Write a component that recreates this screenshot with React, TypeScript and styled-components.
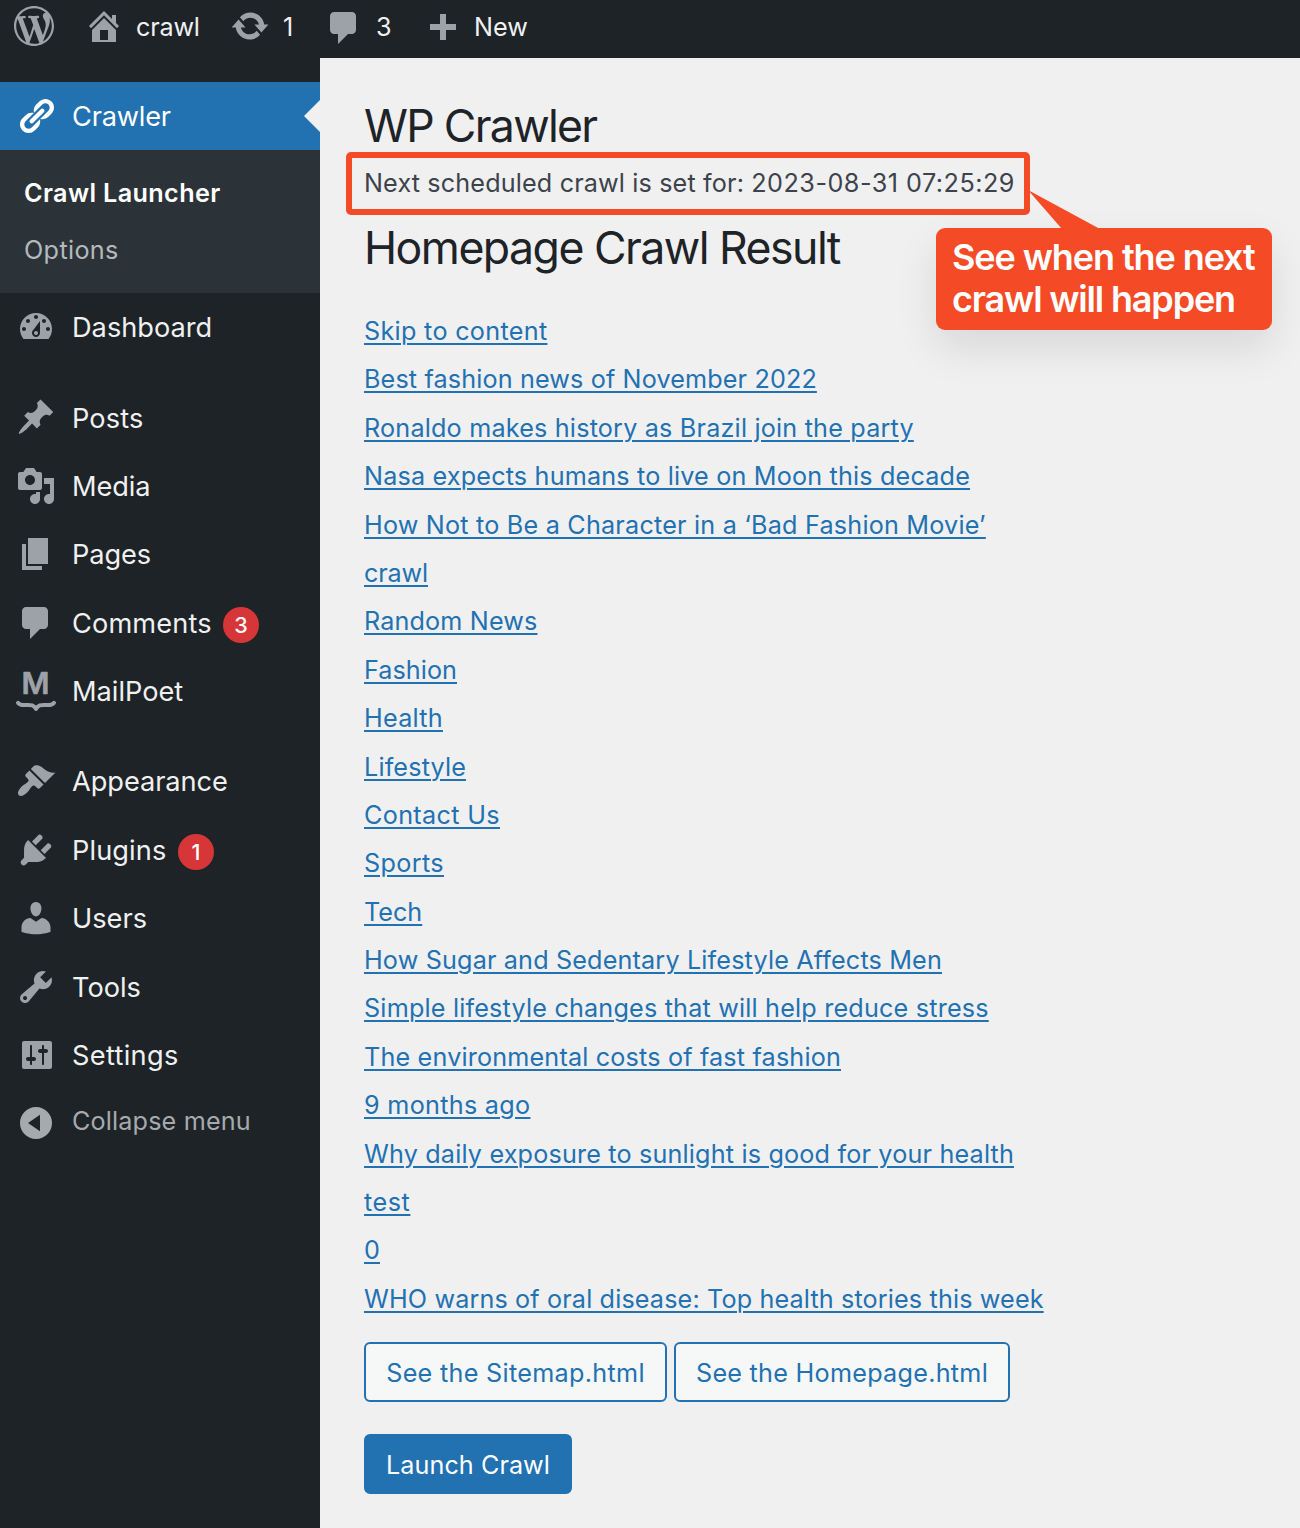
import React from "react";
import styled, { createGlobalStyle, css } from "styled-components";

const colors = {
  bar: "#1d2327",
  submenu: "#2c3338",
  blue: "#2271b1",
  page: "#f0f0f1",
  icon: "#9ca2a7",
  menuText: "#f0f0f1",
  body: "#3c434a",
  heading: "#1d2327",
  badge: "#d63638",
  note: "#f54a26",
};

const GlobalStyle = createGlobalStyle`
  *, *::before, *::after { box-sizing: border-box; }
  body {
    margin: 0;
    background: ${colors.page};
    font-family: Inter, "Liberation Sans", sans-serif;
    font-size: 25.2px;
    color: ${colors.body};
  }
`;

const Text = styled.span<{ $ls?: number }>`
  white-space: nowrap;
  letter-spacing: ${(p) => p.$ls ?? 0}px;
`;

/* ---------- icons ---------- */

const Glyph = styled.svg`
  display: block;
  flex: none;
  width: 40px;
  height: 40px;
  fill: currentColor;
  fill-rule: evenodd;
  overflow: visible;
`;

const paths = {
  wordpress:
    "M20 10c0-5.51-4.49-10-10-10C4.48 0 0 4.49 0 10c0 5.52 4.48 10 10 10 5.51 0 10-4.48 10-10zM7.78 15.37L4.37 6.22c.55-.02 1.17-.08 1.17-.08.5-.06.44-1.13-.06-1.11 0 0-1.45.11-2.37.11-.18 0-.37 0-.58-.01C4.12 2.69 6.87 1.11 10 1.11c2.33 0 4.45.87 6.05 2.34-.68-.11-1.65.39-1.65 1.58 0 .74.45 1.36.9 2.1.35.61.55 1.36.55 2.46 0 1.49-1.4 5-1.4 5l-3.03-8.37c.54-.02.82-.17.82-.17.5-.05.44-1.25-.06-1.22 0 0-1.44.12-2.38.12-.87 0-2.33-.12-2.33-.12-.5-.03-.56 1.2-.06 1.22l.92.08 1.26 3.41zM17.41 10c.24-.64.74-1.87.43-4.25.7 1.29 1.05 2.71 1.05 4.25 0 3.29-1.73 6.24-4.4 7.78.97-2.59 1.94-5.2 2.92-7.78zM6.1 18.09C3.12 16.65 1.11 13.53 1.11 10c0-1.3.23-2.48.72-3.59C3.25 10.3 4.67 14.2 6.1 18.09zm4.03-6.63l2.58 6.98c-.86.29-1.76.45-2.71.45-.79 0-1.57-.11-2.29-.33.81-2.38 1.62-4.74 2.42-7.1z",
  home: "M16 8.5l1.53 1.53-1.06 1.06L10 4.6l-6.47 6.49-1.06-1.06L10 2.5l4 4v-2h2v4zm-6-2.46l6 5.99V18H4v-5.97zM12 17v-5H8v5h4z",
  update:
    "M10.2 3.28c3.53 0 6.43 2.61 6.92 6h2.08l-3.5 4-3.5-4h2.32c-.45-1.97-2.21-3.45-4.32-3.45-1.45 0-2.73.71-3.54 1.78L4.95 5.66C6.23 4.2 8.11 3.28 10.2 3.28zm-.4 13.44c-3.52 0-6.43-2.61-6.92-6H.8l3.5-4c1.17 1.33 2.33 2.67 3.5 4H5.48c.45 1.97 2.21 3.45 4.32 3.45 1.45 0 2.73-.71 3.54-1.78l1.71 1.95c-1.28 1.46-3.15 2.38-5.25 2.38z",
  comments: "M5 2h9c1.1 0 2 .9 2 2v7c0 1.1-.9 2-2 2h-2l-5 5v-5H5c-1.1 0-2-.9-2-2V4c0-1.1.9-2 2-2z",
  plus: "M17 8.5v3h-5v5H9v-5H4v-3h5v-5h3v5z",
  link: "M17.74 2.76c1.68 1.69 1.68 4.41 0 6.1l-1.53 1.52c-1.12 1.12-2.7 1.47-4.14 1.09l2.62-2.61.76-.77.76-.76c.84-.84.84-2.2 0-3.04-.84-.85-2.2-.85-3.04 0l-.77.76-3.38 3.38c-.37-1.44-.02-3.02 1.1-4.14l1.52-1.53c1.69-1.68 4.42-1.68 6.1 0zM8.59 13.43l5.34-5.34c.42-.42.42-1.1 0-1.52-.44-.43-1.13-.39-1.53 0l-5.33 5.34c-.42.42-.42 1.1 0 1.52.44.43 1.13.39 1.52 0zm-.76 2.29l4.14-4.15c.38 1.44.03 3.02-1.09 4.14l-1.52 1.53c-1.69 1.68-4.41 1.68-6.1 0-1.68-1.68-1.68-4.42 0-6.1l1.53-1.52c1.12-1.12 2.7-1.47 4.14-1.1l-4.14 4.15c-.85.84-.85 2.2 0 3.05.84.84 2.2.84 3.04 0z",
  dashboard:
    "M3.76 16h12.48c1.1-1.37 1.76-3.11 1.76-5 0-4.42-3.58-8-8-8s-8 3.58-8 8c0 1.89.66 3.63 1.76 5zM10 4c.55 0 1 .45 1 1s-.45 1-1 1-1-.45-1-1 .45-1 1-1zM6 6c.55 0 1 .45 1 1s-.45 1-1 1-1-.45-1-1 .45-1 1-1zm8 0c.55 0 1 .45 1 1s-.45 1-1 1-1-.45-1-1 .45-1 1-1zm-5.37 5.55L12 7v6c0 1.1-.9 2-2 2s-2-.9-2-2c0-.57.24-1.08.63-1.45zM4 10c.55 0 1 .45 1 1s-.45 1-1 1-1-.45-1-1 .45-1 1-1zm12 0c.55 0 1 .45 1 1s-.45 1-1 1-1-.45-1-1 .45-1 1-1zm-6 2c.55 0 1 .45 1 1s-.45 1-1 1-1-.45-1-1 .45-1 1-1z",
  post: "M10.44 3.02l1.82-1.82 6.36 6.35-1.83 1.82c-1.05-.68-2.48-.57-3.41.36l-.75.75c-.92.93-1.04 2.35-.35 3.41l-1.83 1.82-2.41-2.41-2.8 2.79c-.42.42-3.38 2.71-3.8 2.29s1.86-3.39 2.28-3.81l2.79-2.79L4.1 9.36l1.83-1.82c1.05.69 2.48.57 3.4-.36l.75-.75c.93-.92 1.05-2.35.36-3.41z",
  media:
    "M13 11V4c0-.55-.45-1-1-1h-1.67L9 1H5L3.67 3H2c-.55 0-1 .45-1 1v7c0 .55.45 1 1 1h10c.55 0 1-.45 1-1zM7 4.5c1.38 0 2.5 1.12 2.5 2.5S8.38 9.5 7 9.5 4.5 8.38 4.5 7 5.62 4.5 7 4.5zM14 6h5v10.5c0 1.38-1.12 2.5-2.5 2.5S14 17.88 14 16.5s1.12-2.5 2.5-2.5c.17 0 .34.02.5.05V9h-3V6zm-4 8.05V13h2v3.5c0 1.38-1.12 2.5-2.5 2.5S7 17.88 7 16.5 8.12 14 9.5 14c.17 0 .34.02.5.05z",
  page: "M6 15V2h10v13H6zm-1 1h8v2H3V5h2v11z",
  appearance:
    "M14.48 11.06L7.41 3.99l1.5-1.5c.5-.56 2.3-.47 3.51.32 1.21.8 1.43 1.28 2.91 2.1 1.18.64 2.45 1.26 4.45.85zm-.71.71L6.7 4.7 4.93 6.47c-.39.39-.39 1.02 0 1.41l1.06 1.06c.39.39.39 1.03 0 1.42-.6.6-1.43 1.11-2.21 1.69-.35.26-.7.53-1.01.84C1.43 14.23.4 16.08 1.4 17.07c.99 1 2.84-.03 4.18-1.36.31-.31.58-.66.85-1.02.57-.78 1.08-1.61 1.69-2.21.39-.39 1.02-.39 1.41 0l1.06 1.06c.39.39 1.02.39 1.41 0z",
  plugins:
    "M13.11 4.36L9.87 7.6 8 5.73l3.24-3.24c.35-.34 1.05-.2 1.56.32.52.51.66 1.21.31 1.55zm-8 1.77l.91-1.12 9.01 9.01-1.19.84c-.71.71-2.63 1.16-3.82 1.16H6.14L4.9 17.26c-.59.59-1.54.59-2.12 0-.59-.58-.59-1.53 0-2.12l1.24-1.24v-3.88c0-1.13.4-3.19 1.09-3.89zm7.26 3.97l3.24-3.24c.34-.35 1.04-.21 1.55.31.52.51.66 1.21.31 1.55l-3.24 3.25z",
  users:
    "M10 9.25c-2.27 0-2.73-3.44-2.73-3.44C7 4.02 7.82 2 9.97 2c2.16 0 2.98 2.02 2.71 3.81 0 0-.41 3.44-2.68 3.44zm0 2.57L12.72 10c2.39 0 4.52 2.33 4.52 4.53v2.49s-3.65 1.13-7.24 1.13c-3.65 0-7.24-1.13-7.24-1.13v-2.49c0-2.25 1.94-4.48 4.47-4.48z",
  tools:
    "M16.68 9.77c-1.34 1.34-3.3 1.67-4.95.99l-5.41 6.52c-.99.99-2.59.99-3.58 0s-.99-2.59 0-3.57l6.52-5.42c-.68-1.65-.35-3.61.99-4.95 1.28-1.28 3.12-1.62 4.72-1.06l-2.89 2.89 2.82 2.82 2.86-2.87c.53 1.58.18 3.39-1.08 4.65zM3.81 16.21c.4.39 1.04.39 1.43 0 .4-.4.4-1.04 0-1.43-.39-.4-1.03-.4-1.43 0-.39.39-.39 1.03 0 1.43z",
  settings:
    "M18 16V4c0-.55-.45-1-1-1H4c-.55 0-1 .45-1 1v12c0 .55.45 1 1 1h13c.55 0 1-.45 1-1zM8 11h1c.55 0 1 .45 1 1s-.45 1-1 1H8v1.5c0 .28-.22.5-.5.5s-.5-.22-.5-.5V13H6c-.55 0-1-.45-1-1s.45-1 1-1h1V5.5c0-.28.22-.5.5-.5s.5.22.5.5V11zm5-2h-1c-.55 0-1-.45-1-1s.45-1 1-1h1V5.5c0-.28.22-.5.5-.5s.5.22.5.5V7h1c.55 0 1 .45 1 1s-.45 1-1 1h-1v5.5c0 .28-.22.5-.5.5s-.5-.22-.5-.5V9z",
  collapse: "M10 2a8 8 0 1 0 0 16a8 8 0 1 0 0-16zM12 5.9v8.2L6 10z",
};

type IconName = keyof typeof paths | "mailpoet";

const Icon = ({ name }: { name: IconName }) =>
  name === "mailpoet" ? (
    <Glyph viewBox="0 0 40 40" color="#a7a9ac">
      <text
        x="19.6"
        y="22.6"
        textAnchor="middle"
        fontSize="30.5"
        fontWeight="600"
        textLength="28"
        lengthAdjust="spacingAndGlyphs"
        stroke="currentColor"
        strokeWidth="0.6"
        strokeLinejoin="round"
      >
        M
      </text>
      <path
        d="M2 31.8q1.5 2.2 6 2.2c6 0 9.500-1.200 12 4c2.500-5.200 6-4 12-4q4.500 0 6-2.200"
        fill="none"
        stroke="currentColor"
        strokeWidth="4"
        strokeLinecap="round"
        strokeLinejoin="round"
      />
    </Glyph>
  ) : (
    <Glyph viewBox="0 0 20 20">
      <path d={paths[name]} />
    </Glyph>
  );

/* ---------- admin bar ---------- */

const AdminBar = styled.header`
  display: flex;
  align-items: flex-start;
  height: 58px;
  padding-left: 14px;
  background: ${colors.bar};
  color: ${colors.menuText};
`;

const BarItem = styled.a<{ $left?: number; $gap?: number; $drop?: number }>`
  display: flex;
  align-items: flex-start;
  gap: ${(p) => p.$gap ?? 0}px;
  margin-left: ${(p) => p.$left ?? 0}px;
  line-height: 55px;

  svg {
    margin-top: ${(p) => p.$drop ?? 6}px;
    color: ${colors.icon};
  }
`;

const BarLabel = styled(Text)<{ $w: number }>`
  width: ${(p) => p.$w}px;
`;

/* ---------- side menu ---------- */

const Shell = styled.div`
  display: flex;
  min-height: 1470px;
`;

const Sidebar = styled.nav`
  flex: none;
  width: 320px;
  padding-top: 24px;
  background: ${colors.bar};
  color: ${colors.menuText};
`;

const MenuRow = styled.a<{ $active?: boolean; $spaced?: boolean }>`
  position: relative;
  display: flex;
  align-items: center;
  height: 68.4px;
  margin-top: ${(p) => (p.$spaced ? 22 : 0)}px;
  padding-left: 16px;
  font-size: 27.2px;

  svg {
    color: ${colors.icon};
  }

  ${(p) =>
    p.$active &&
    css`
      height: 68px;
      background: ${colors.blue};
      color: #fff;

      svg {
        color: #fff;
      }

      &::after {
        content: "";
        position: absolute;
        right: 0;
        top: 18px;
        border: 16px solid transparent;
        border-left: 0;
        border-right-color: ${colors.page};
      }
    `}
`;

const MenuLabel = styled(Text)`
  margin-left: 16px;
  padding-top: 1.3px;
`;

const Badge = styled.span<{ $left: number }>`
  display: flex;
  align-items: center;
  justify-content: center;
  width: 36px;
  height: 36px;
  margin: 4px 0 0 ${(p) => p.$left}px;
  border-radius: 50%;
  background: ${colors.badge};
  color: #fff;
  font-size: 21.6px;
  font-weight: 500;
  line-height: 36px;
`;

const Submenu = styled.div`
  height: 142.8px;
  padding: 15px 24px 13px;
  background: ${colors.submenu};
`;

const SubItem = styled.a<{ $current?: boolean }>`
  display: block;
  height: 57.2px;
  line-height: 57.2px;
  color: ${(p) => (p.$current ? "#fff" : "#b4b9be")};
  font-weight: ${(p) => (p.$current ? 600 : 400)};
`;

const Collapse = styled.button`
  display: flex;
  align-items: center;
  height: 68px;
  padding: 0 0 0 16px;
  border: 0;
  background: none;
  color: #a7aaad;
  font: inherit;
`;

const CollapseLabel = styled(Text)`
  margin: 0 0 4px 16px;
`;

/* ---------- content ---------- */

const Content = styled.main`
  flex: 1;
  padding: 38px 0 0 44px;
`;

const Title = styled.h1`
  margin: 0;
  color: ${colors.heading};
  font-size: 44.6px;
  font-weight: 400;
  line-height: 60px;
`;

const Schedule = styled.div`
  position: relative;
  width: max-content;
  margin: 9px 0 17px;
  line-height: 36.4px;
`;

const Highlight = styled.div`
  position: absolute;
  left: -18px;
  top: -13px;
  width: 684px;
  height: 63px;
  border: 6px solid ${colors.note};
  border-radius: 5px;
`;

const Callout = styled.div`
  position: absolute;
  left: 572px;
  top: 63px;
  width: 336px;
  height: 102px;
  padding: 8px 16px;
  border-radius: 9px;
  background: ${colors.note};
  box-shadow: 0 18px 42px rgba(0, 0, 0, 0.1);
  color: #fff;
  font-size: 36px;
  font-weight: 600;
  line-height: 42px;
`;

const CalloutLine = styled(Text)`
  display: block;
`;

const Pointer = styled.svg`
  position: absolute;
  left: 92px;
  top: -38px;
  width: 72px;
  height: 39px;
  fill: ${colors.note};
`;

const LinkList = styled.ul`
  display: flex;
  flex-direction: column;
  gap: 11.985px;
  margin: 34.6px 0 24.9px;
  padding: 0;
  list-style: none;
  line-height: 36.4px;

  a {
    color: ${colors.blue};
    text-decoration: underline;
    text-decoration-thickness: 2px;
    text-underline-offset: 2.5px;
  }
`;

const Actions = styled.div`
  display: flex;
  gap: 7px;
  margin-bottom: 32px;
`;

const Button = styled.button<{ $primary?: boolean; $w: number }>`
  width: ${(p) => p.$w}px;
  height: 60px;
  padding: 2px 0 0;
  border: 2px solid ${colors.blue};
  border-radius: 6px;
  background: ${(p) => (p.$primary ? colors.blue : "#f6f7f7")};
  color: ${(p) => (p.$primary ? "#fff" : colors.blue)};
  font: inherit;
`;

/* ---------- data ---------- */

interface MenuEntry {
  icon: IconName;
  label: string;
  ls?: number;
  spaced?: boolean;
  badge?: number;
  badgeGap?: number;
}

const menu: MenuEntry[] = [
  { icon: "dashboard", label: "Dashboard" },
  { icon: "post", label: "Posts", ls: 0.15, spaced: true },
  { icon: "media", label: "Media", ls: -0.1 },
  { icon: "page", label: "Pages", ls: -0.1 },
  { icon: "comments", label: "Comments", ls: 0.12, badge: 3, badgeGap: 11.3 },
  { icon: "mailpoet", label: "MailPoet" },
  { icon: "appearance", label: "Appearance", ls: -0.05, spaced: true },
  { icon: "plugins", label: "Plugins", ls: 0.1, badge: 1, badgeGap: 11.6 },
  { icon: "users", label: "Users" },
  { icon: "tools", label: "Tools" },
  { icon: "settings", label: "Settings", ls: 0.32 },
];

const links: [string, number][] = [
  ["Skip to content", 0.3],
  ["Best fashion news of November 2022", 0.13],
  ["Ronaldo makes history as Brazil join the party", 0.185],
  ["Nasa expects humans to live on Moon this decade", 0.17],
  ["How Not to Be a Character in a ‘Bad Fashion Movie’", 0.2],
  ["crawl", -0.15],
  ["Random News", 0.145],
  ["Fashion", 0.05],
  ["Health", 0.26],
  ["Lifestyle", 0.145],
  ["Contact Us", 0.33],
  ["Sports", 0.35],
  ["Tech", 0],
  ["How Sugar and Sedentary Lifestyle Affects Men", 0.153],
  ["Simple lifestyle changes that will help reduce stress", 0.184],
  ["The environmental costs of fast fashion", 0.168],
  ["9 months ago", 0.29],
  ["Why daily exposure to sunlight is good for your health", 0.168],
  ["test", 0.55],
  ["0", 0.1],
  ["WHO warns of oral disease: Top health stories this week", 0.133],
];

export default function App() {
  return (
    <>
      <GlobalStyle />
      <AdminBar>
        <BarItem>
          <Icon name="wordpress" />
        </BarItem>
        <BarItem $left={30} $gap={12}>
          <Icon name="home" />
          <BarLabel $w={64} $ls={-0.2}>crawl</BarLabel>
        </BarItem>
        <BarItem $left={30} $gap={13}>
          <Icon name="update" />
          <BarLabel $w={12}>1</BarLabel>
        </BarItem>
        <BarItem $left={29} $gap={12} $drop={8}>
          <Icon name="comments" />
          <BarLabel $w={16}>3</BarLabel>
        </BarItem>
        <BarItem $left={30} $gap={12} $drop={7}>
          <Icon name="plus" />
          <BarLabel $w={54}>New</BarLabel>
        </BarItem>
      </AdminBar>
      <Shell>
        <Sidebar>
          <MenuRow $active>
            <Icon name="link" />
            <MenuLabel $ls={-0.2}>Crawler</MenuLabel>
          </MenuRow>
          <Submenu>
            <SubItem $current>
              <Text $ls={0.37}>Crawl Launcher</Text>
            </SubItem>
            <SubItem>
              <Text $ls={0.35}>Options</Text>
            </SubItem>
          </Submenu>
          {menu.map((m) => (
            <MenuRow key={m.label} $spaced={m.spaced}>
              <Icon name={m.icon} />
              <MenuLabel $ls={m.ls}>{m.label}</MenuLabel>
              {m.badge && <Badge $left={m.badgeGap ?? 0}>{m.badge}</Badge>}
            </MenuRow>
          ))}
          <Collapse>
            <Icon name="collapse" />
            <CollapseLabel $ls={0.15}>Collapse menu</CollapseLabel>
          </Collapse>
        </Sidebar>
        <Content>
          <Title>
            <Text $ls={-1.7}>WP Crawler</Text>
          </Title>
          <Schedule>
            <Text $ls={0.14}>
              Next scheduled crawl is set for: <Text $ls={0.49}>2023-08-31 07:25:29</Text>
            </Text>
            <Highlight />
            <Callout>
              <Pointer viewBox="0 0 72 39">
                <path d="M0 0L72 39H34z" />
              </Pointer>
              <CalloutLine $ls={-1.09}>See when the next</CalloutLine>
              <CalloutLine $ls={-1.17}>crawl will happen</CalloutLine>
            </Callout>
          </Schedule>
          <Title as="h2">
            <Text $ls={-1.52}>Homepage Crawl Result</Text>
          </Title>
          <LinkList>
            {links.map(([label, ls]) => (
              <li key={label}>
                <a>
                  <Text $ls={ls}>{label}</Text>
                </a>
              </li>
            ))}
          </LinkList>
          <Actions>
            <Button $w={303}>
              <Text $ls={0.3}>See the Sitemap.html</Text>
            </Button>
            <Button $w={336}>
              <Text $ls={0.26}>See the Homepage.html</Text>
            </Button>
          </Actions>
          <Button $primary $w={208}>
            <Text $ls={0.05}>Launch Crawl</Text>
          </Button>
        </Content>
      </Shell>
    </>
  );
}
